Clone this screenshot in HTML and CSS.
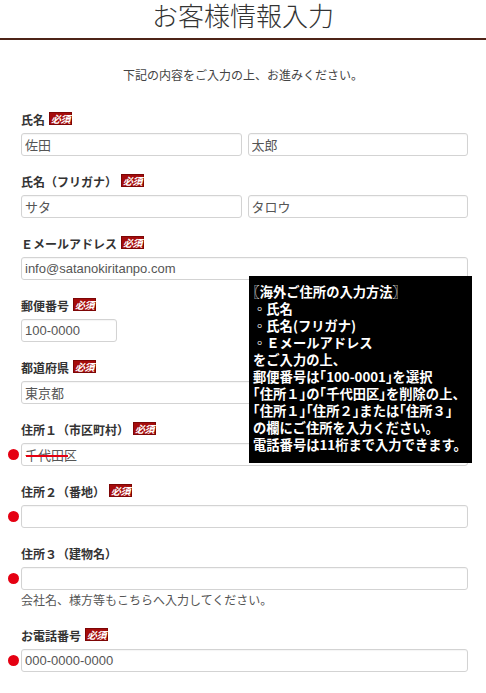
FILE: index.html
```html
<!DOCTYPE html>
<html lang="ja">
<head>
  <meta charset="UTF-8" />
  <title>お客様情報入力</title>
  <link rel="stylesheet" href="styles.css">
</head>
<body>

  <header class="pageHead">
    <h1>お客様情報入力</h1>
  </header>

  <p class="lead">下記の内容をご入力の上、お進みください。</p>

  <form class="entry">
    <div class="field">
      <label class="fieldLabel">氏名<span class="req">必須</span></label>
      <div class="pair">
        <input class="textBox" type="text" value="佐田" />
        <input class="textBox" type="text" value="太郎" />
      </div>
    </div>

    <div class="field">
      <label class="fieldLabel">氏名（フリガナ）<span class="req">必須</span></label>
      <div class="pair">
        <input class="textBox" type="text" value="サタ" />
        <input class="textBox" type="text" value="タロウ" />
      </div>
    </div>

    <div class="field">
      <label class="fieldLabel">Ｅメールアドレス<span class="req">必須</span></label>
      <input class="textBox" type="text" value="info@satanokiritanpo.com" />
    </div>

    <div class="field">
      <label class="fieldLabel">郵便番号<span class="req">必須</span></label>
      <input class="textBox zip" type="text" value="100-0000" />
    </div>

    <div class="field">
      <label class="fieldLabel">都道府県<span class="req">必須</span></label>
      <input class="textBox" type="text" value="東京都" />
    </div>

    <div class="field">
      <label class="fieldLabel">住所１（市区町村）<span class="req">必須</span></label>
      <div class="marked">
        <span class="dot"></span>
        <input class="textBox" type="text" value="千代田区" />
        <span class="strike"></span>
      </div>
    </div>

    <div class="field">
      <label class="fieldLabel">住所２（番地）<span class="req">必須</span></label>
      <div class="marked">
        <span class="dot"></span>
        <input class="textBox" type="text" value="" />
      </div>
    </div>

    <div class="field">
      <label class="fieldLabel">住所３（建物名）</label>
      <div class="marked">
        <span class="dot"></span>
        <input class="textBox" type="text" value="" />
      </div>
      <p class="note">会社名、様方等もこちらへ入力してください。</p>
    </div>

    <div class="field">
      <label class="fieldLabel">お電話番号<span class="req">必須</span></label>
      <div class="marked">
        <span class="dot"></span>
        <input class="textBox" type="text" value="000-0000-0000" />
      </div>
    </div>

    <!-- overseas address help -->
    <div class="helpBox">
      〖海外ご住所の入力方法〗<br>
      ◦氏名<br>
      ◦氏名(フリガナ)<br>
      ◦Ｅメールアドレス<br>
      をご入力の上、<br>
      郵便番号は「100-0001」を選択<br>
      「住所１」の「千代田区」を削除の上、<br>
      「住所１」「住所２」または「住所３」<br>
      の欄にご住所を入力ください。<br>
      電話番号は11桁まで入力できます。
    </div>
  </form>

</body>
</html>
```

FILE: styles.css
```css
body {
  margin: 0;
  padding: 0;
  background: #fff;
  color: #333;
  font-family: "Noto Sans CJK JP", "Liberation Sans", sans-serif;
}

.pageHead {
  border-bottom: 2px solid #4e2418;
  padding-bottom: 8px;
}

.pageHead h1 {
  margin: 0;
  text-align: center;
  font-size: 26px;
  line-height: 30px;
  font-weight: 300;
  color: #333;
}

.lead {
  margin: 27px 0 0;
  text-align: center;
  font-size: 12px;
  line-height: 16px;
  color: #444;
}

.entry {
  position: relative;
  margin-top: 29px;
  padding: 0 18px 0 21px;
}

.field {
  margin-bottom: 18px;
}

.fieldLabel {
  display: block;
  margin-bottom: 5px;
  font-size: 12px;
  line-height: 16px;
  font-weight: bold;
  color: #333;
}

.req {
  display: inline-block;
  margin-left: 4px;
  padding: 0 1px;
  background: #a50c0c;
  border: 1px solid #7d0606;
  color: #fff;
  font-size: 10px;
  line-height: 11px;
  font-weight: bold;
  font-style: italic;
  letter-spacing: -0.5px;
  vertical-align: 2px;
}

.pair {
  display: flex;
  gap: 6px;
}

.pair .textBox {
  flex: 1;
  min-width: 0;
}

.textBox {
  display: block;
  box-sizing: border-box;
  width: 100%;
  height: 23px;
  margin: 0;
  padding: 0 3px;
  border: 1px solid #d3d3d3;
  border-radius: 3px;
  box-shadow: inset 0 1px 1px rgba(0,0,0,0.04);
  background: #fff;
  color: #555;
  font-family: "Liberation Sans", "Noto Sans CJK JP", sans-serif;
  font-size: 13px;
  outline: none;
}

.textBox.zip {
  width: 96px;
}

.marked {
  position: relative;
}

.dot {
  position: absolute;
  left: -13px;
  top: 6px;
  width: 11px;
  height: 11px;
  border-radius: 50%;
  background: #e50012;
}

.strike {
  position: absolute;
  left: 5px;
  top: 12px;
  width: 42px;
  height: 2px;
  background: #e50012;
}

.note {
  margin: 0;
  font-size: 12px;
  line-height: 20px;
  color: #555;
}

.helpBox {
  position: absolute;
  left: 249px;
  top: 164px;
  width: 223px;
  height: 187px;
  box-sizing: border-box;
  padding: 7px 4px 0;
  background: #000;
  color: #fff;
  font-size: 13.3px;
  line-height: 17px;
  font-weight: bold;
  font-feature-settings: "halt";
  white-space: nowrap;
}
```
